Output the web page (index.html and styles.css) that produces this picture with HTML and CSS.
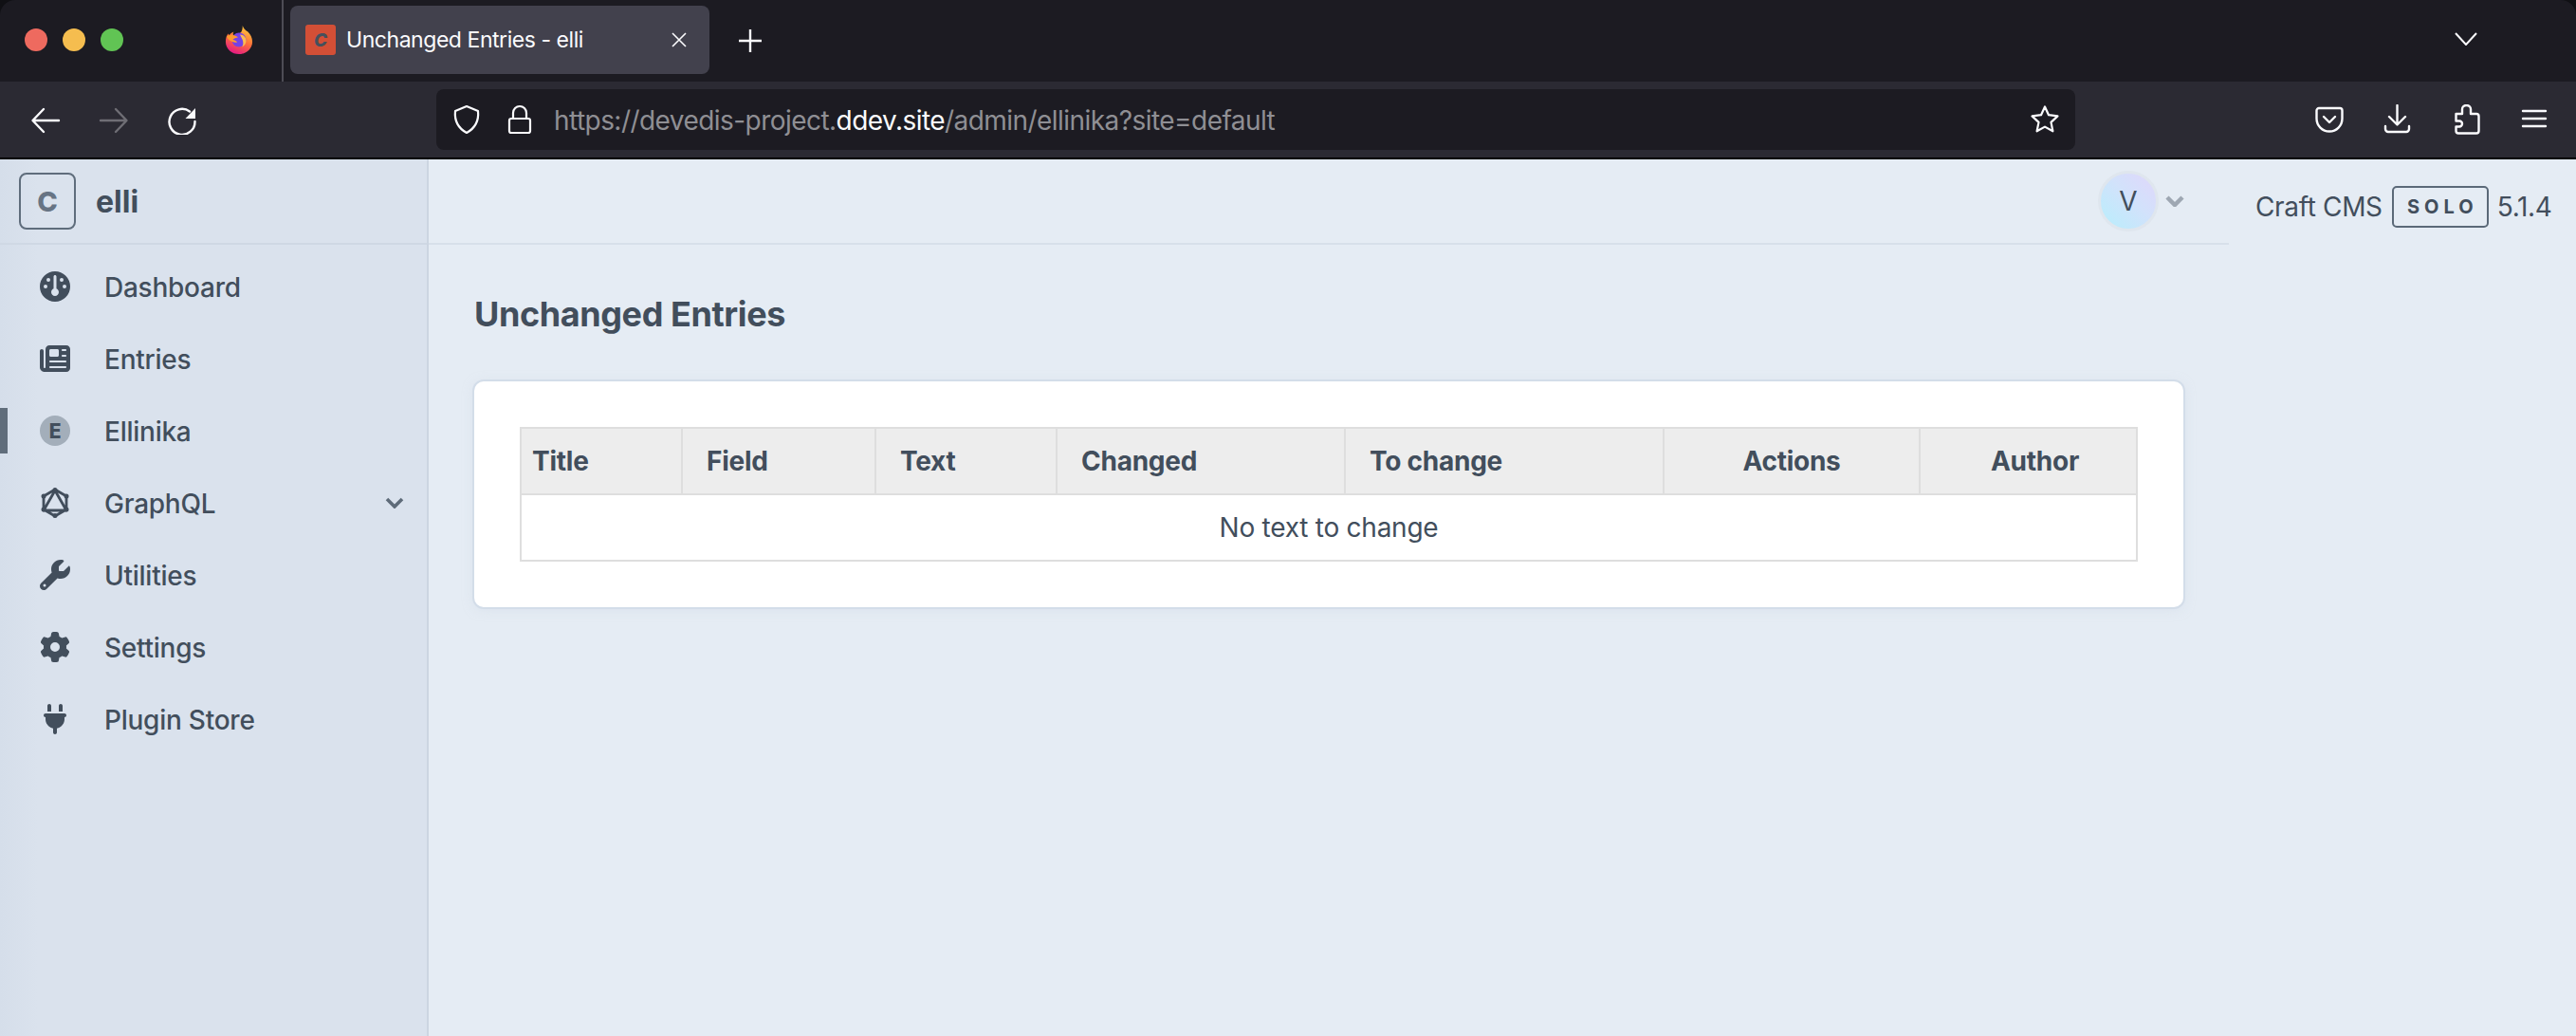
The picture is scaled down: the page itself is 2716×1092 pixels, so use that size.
FILE: index.html
```html
<!DOCTYPE html>
<html lang="en">
<head>
<meta charset="utf-8">
<title>Unchanged Entries - elli</title>
<link rel="stylesheet" href="styles.css">
</head>
<body>
<div class="window">
  <div class="tabbar">
    <div class="lights"><span class="light red"></span><span class="light yellow"></span><span class="light green"></span></div>
    <svg class="firefox" viewBox="0 0 32 32"><defs><linearGradient id="ff" x1="0.7" y1="0" x2="0.3" y2="1"><stop offset="0" stop-color="#ffcb3d"/><stop offset="0.5" stop-color="#ff7139"/><stop offset="1" stop-color="#e31587"/></linearGradient></defs><path fill="url(#ff)" d="M20 0c1 3 3 5 6 7 3 3 5 7 5 11 0 8-7 14-15 14S1 26 1 18c0-4 1-7 3-9l1 2c1-2 3-3 5-4-1 2-1 3 0 4 3-1 8-2 9-5 1-2 1-4 1-6z"/><circle cx="16" cy="16" r="8" fill="#7542e5"/><path fill="#ff9a2e" d="M2 12c4-2 9-2 13 1-2 1-5 1-6 3 2 0 4 1 5 3-5 0-10-2-12-7z"/><path fill="#ffbd4f" d="M17 10c4 0 7 3 7 7 0 3-2 6-5 7 2-2 2-5 1-8-1-2-2-4-3-6z"/></svg>
    <div class="tab-sep"></div>
    <div class="tab">
      <span class="favicon"><span class="favicon-c">C</span></span>
      <span class="tab-title">Unchanged Entries - elli</span>
      <svg class="tab-close" viewBox="0 0 16 16"><path d="M1 1l14 14M15 1L1 15"/></svg>
    </div>
    <svg class="tab-plus" viewBox="0 0 24 24"><path d="M12 0v24M0 12h24"/></svg>
    <svg class="tab-list" viewBox="0 0 24 14"><path d="M1 1l11 12L23 1"/></svg>
  </div>
  <div class="toolbar">
    <div class="nav-btns">
      <span class="tool"><svg class="ico" viewBox="0 0 32 32"><path d="M30 17H3M14 5L2.500 17 14 29"/></svg></span>
      <span class="tool"><svg class="ico dim" viewBox="0 0 32 32"><path d="M2 17h27M18 5l11.500 12L18 29"/></svg></span>
      <span class="tool"><svg class="ico" viewBox="0 0 32 32"><path d="M24 7.500A13.500 13.500 0 1 0 29.500 18"/><path class="solid" d="M30 4v11H19.500z"/></svg></span>
    </div>
    <div class="urlbar">
      <svg class="url-ico" viewBox="0 0 32 32"><path d="M16 2l12 5c1 10-3 18-12 23C7 25 3 17 4 7z"/></svg>
      <svg class="url-ico" viewBox="0 0 32 32"><path d="M7 15h18a2 2 0 0 1 2 2v11a2 2 0 0 1-2 2H7a2 2 0 0 1-2-2V17a2 2 0 0 1 2-2zM9 15V9a7 7 0 0 1 14 0v6"/></svg>
      <span class="url"><span class="url-dim">https://devedis-project.</span>ddev.site<span class="url-dim">/admin/ellinika?site=default</span></span>
      <svg class="url-ico star" viewBox="0 0 32 32"><path d="M16 2.500l4 8.700 9.500 1.200-7 6.500 1.900 9.400L16 23.600l-8.400 4.700 1.900-9.400-7-6.500 9.500-1.200z"/></svg>
    </div>
    <div class="tools-right">
      <span class="tool"><svg class="ico" viewBox="0 0 32 32"><path d="M5 4h22a2.500 2.500 0 0 1 2.500 2.500V15a13.500 13.500 0 0 1-27 0V6.500A2.500 2.500 0 0 1 5 4zM10 13l6 6 6-6"/></svg></span>
      <span class="tool"><svg class="ico" viewBox="0 0 32 32"><path d="M15.500 1v20M7 13l8.500 8.500L24 13M3 23v3a3 3 0 0 0 3 3h19a3 3 0 0 0 3-3v-3"/></svg></span>
      <span class="tool"><svg class="ico" viewBox="0 0 32 32"><path d="M5.500 10H12V5a4.500 4 0 0 1 9 0v5h6a2.500 2.500 0 0 1 2.500 2.500V28a2.500 2.500 0 0 1-2.500 2.500H8A2.500 2.500 0 0 1 5.500 28v-4.500H9a3 3 0 0 0 0-6H5.500z"/></svg></span>
      <span class="tool"><svg class="ico" viewBox="0 0 32 32"><path d="M4 7h24M4 15h24M4 23h24"/></svg></span>
    </div>
  </div>
  <div class="app">
    <aside class="sidebar">
      <div class="brand">
        <span class="logo">C</span>
        <span class="site-name">elli</span>
      </div>
      <nav class="nav">
        <a class="nav-item"><svg class="nav-ico" viewBox="0 0 512 512"><path d="M0 256a256 256 0 1 1 512 0A256 256 0 1 1 0 256zm320 96c0-26.900-16.500-49.900-40-59.300V88c0-13.300-10.700-24-24-24s-24 10.700-24 24V292.700c-23.500 9.500-40 32.500-40 59.300c0 35.300 28.700 64 64 64s64-28.700 64-64zM144 176a32 32 0 1 0 0-64 32 32 0 1 0 0 64zm-16 80a32 32 0 1 0 -64 0 32 32 0 1 0 64 0zm288 32a32 32 0 1 0 0-64 32 32 0 1 0 0 64zM400 144a32 32 0 1 0 -64 0 32 32 0 1 0 64 0z"/></svg><span>Dashboard</span></a>
        <a class="nav-item"><svg class="nav-ico" viewBox="0 0 512 512"><path d="M96 96c0-35.300 28.700-64 64-64H448c35.300 0 64 28.700 64 64V416c0 35.300-28.700 64-64 64H80c-44.200 0-80-35.800-80-80V128c0-17.700 14.300-32 32-32s32 14.300 32 32V400c0 8.800 7.200 16 16 16s16-7.200 16-16V96zm64 24v80c0 13.300 10.700 24 24 24H296c13.300 0 24-10.700 24-24V120c0-13.300-10.700-24-24-24H184c-13.300 0-24 10.700-24 24zm208-8c0 8.800 7.200 16 16 16h48c8.800 0 16-7.200 16-16s-7.200-16-16-16H384c-8.800 0-16 7.200-16 16zm0 96c0 8.800 7.200 16 16 16h48c8.800 0 16-7.200 16-16s-7.200-16-16-16H384c-8.800 0-16 7.200-16 16zM160 304c0 8.800 7.200 16 16 16H432c8.800 0 16-7.200 16-16s-7.200-16-16-16H176c-8.800 0-16 7.200-16 16zm0 96c0 8.800 7.200 16 16 16H432c8.800 0 16-7.200 16-16s-7.200-16-16-16H176c-8.800 0-16 7.200-16 16z"/></svg><span>Entries</span></a>
        <a class="nav-item active"><span class="letter-ico">E</span><span>Ellinika</span></a>
        <a class="nav-item"><svg class="nav-ico graphql" viewBox="0 0 32 32"><path d="M16 2L28 9v14L16 30 4 23V9zM16 3L4 24h24z"/><g class="dots"><circle cx="16" cy="2.500" r="2.500"/><circle cx="28" cy="9" r="2.500"/><circle cx="28" cy="23" r="2.500"/><circle cx="16" cy="29.500" r="2.500"/><circle cx="4" cy="23" r="2.500"/><circle cx="4" cy="9" r="2.500"/></g></svg><span>GraphQL</span><svg class="nav-chev" viewBox="0 0 20 12"><path d="M2 2l8 8 8-8"/></svg></a>
        <a class="nav-item"><svg class="nav-ico" viewBox="0 0 512 512"><path d="M352 320c88.400 0 160-71.600 160-160c0-15.300-2.200-30.100-6.200-44.200c-3.100-10.800-16.400-13.200-24.300-5.300l-76.800 76.800c-3 3-7.100 4.700-11.300 4.700H336c-8.800 0-16-7.200-16-16V118.600c0-4.200 1.700-8.300 4.700-11.300l76.800-76.800c7.900-7.900 5.400-21.200-5.300-24.300C382.100 2.200 367.300 0 352 0C263.600 0 192 71.600 192 160c0 19.100 3.400 37.500 9.500 54.500L19.900 396.100C7.200 408.800 0 426.100 0 444.100C0 481.600 30.400 512 67.900 512c18 0 35.300-7.200 48-19.900L297.500 310.500c17 6.200 35.400 9.500 54.500 9.500zM80 408a24 24 0 1 1 0 48 24 24 0 1 1 0-48z"/></svg><span>Utilities</span></a>
        <a class="nav-item"><svg class="nav-ico" viewBox="0 0 512 512"><path d="M495.900 166.600c3.200 8.700 .5 18.400-6.400 24.600l-43.300 39.400c1.100 8.300 1.700 16.800 1.700 25.400s-.6 17.100-1.700 25.400l43.300 39.400c6.900 6.200 9.600 15.900 6.400 24.600c-4.400 11.900-9.700 23.300-15.800 34.300l-4.700 8.100c-6.600 11-14 21.400-22.100 31.200c-5.900 7.200-15.700 9.600-24.500 6.800l-55.700-17.700c-13.400 10.300-28.200 18.900-44 25.400l-12.500 57.100c-2 9.100-9 16.300-18.200 17.800c-13.800 2.300-28 3.500-42.500 3.500s-28.700-1.200-42.500-3.500c-9.200-1.500-16.200-8.700-18.200-17.800l-12.500-57.100c-15.800-6.500-30.600-15.100-44-25.400L83.100 425.900c-8.800 2.800-18.600 .3-24.500-6.800c-8.100-9.800-15.500-20.200-22.100-31.200l-4.700-8.100c-6.100-11-11.400-22.400-15.800-34.300c-3.200-8.700-.5-18.400 6.400-24.600l43.300-39.400C64.600 273.100 64 264.600 64 256s.6-17.100 1.700-25.400L22.400 191.200c-6.900-6.200-9.600-15.900-6.400-24.600c4.400-11.900 9.700-23.300 15.800-34.300l4.700-8.100c6.600-11 14-21.400 22.100-31.200c5.900-7.200 15.700-9.600 24.500-6.800l55.700 17.700c13.400-10.300 28.200-18.900 44-25.400l12.500-57.100c2-9.100 9-16.300 18.200-17.800C227.300 1.200 241.500 0 256 0s28.700 1.200 42.500 3.500c9.200 1.500 16.200 8.700 18.200 17.800l12.500 57.100c15.800 6.500 30.600 15.100 44 25.400l55.700-17.700c8.800-2.800 18.600-.3 24.500 6.800c8.100 9.800 15.500 20.200 22.100 31.200l4.700 8.100c6.100 11 11.400 22.400 15.800 34.300zM256 336a80 80 0 1 0 0-160 80 80 0 1 0 0 160z"/></svg><span>Settings</span></a>
        <a class="nav-item"><svg class="nav-ico" viewBox="0 0 384 512"><path d="M96 0C78.300 0 64 14.300 64 32v96h64V32c0-17.700-14.300-32-32-32zM288 0c-17.700 0-32 14.300-32 32v96h64V32c0-17.700-14.300-32-32-32zM32 160c-17.700 0-32 14.300-32 32s14.300 32 32 32v32c0 77.400 55 142 128 156.800V480c0 17.700 14.300 32 32 32s32-14.300 32-32V412.800C297 398 352 333.400 352 256V224c17.700 0 32-14.300 32-32s-14.300-32-32-32H32z"/></svg><span>Plugin Store</span></a>
      </nav>
    </aside>
    <main class="main">
      <header class="topbar">
        <span class="avatar">V</span>
        <svg class="top-chev" viewBox="0 0 20 12"><path d="M2 2l8 8 8-8"/></svg>
      </header>
      <div class="content">
        <h1 class="page-title">Unchanged Entries</h1>
        <section class="card">
          <table class="grid">
            <colgroup><col class="c1"><col class="c2"><col class="c3"><col class="c4"><col class="c5"><col class="c6"><col class="c7"></colgroup>
            <thead>
              <tr><th class="first">Title</th><th>Field</th><th>Text</th><th>Changed</th><th>To change</th><th class="center">Actions</th><th class="center author">Author</th></tr>
            </thead>
            <tbody>
              <tr><td colspan="7">No text to change</td></tr>
            </tbody>
          </table>
        </section>
      </div>
    </main>
    <div class="edition">
      <span>Craft CMS</span><span class="badge">SOLO</span><span>5.1.4</span>
    </div>
  </div>
</div>
</body>
</html>
```
FILE: styles.css
```css
* { box-sizing: border-box; }
html, body { margin: 0; height: 100%; }
body { font-family: Inter, "Liberation Sans", sans-serif; color: #424e5c; background: #101014; overflow: hidden; }
.window { height: 1092px; display: flex; flex-direction: column; }

.tabbar { height: 86px; flex: none; background: #1c1b22; border-radius: 16px 16px 0 0; display: flex; align-items: flex-start; }
.lights { display: flex; gap: 16px; margin: 30px 0 0 26px; }
.light { width: 24px; height: 24px; border-radius: 50%; }
.red { background: #ee6a5f; }
.yellow { background: #f5bd4f; }
.green { background: #61c454; }
.firefox { width: 30px; height: 32px; margin: 26px 0 0 107px; flex: none; }
.tab-sep { width: 2px; height: 86px; background: #4d4c55; margin-left: 30px; flex: none; }
.tab { width: 442px; height: 72px; margin: 6px 0 0 7px; padding: 0 24px 0 16px; border-radius: 8px; background: #42414d; display: flex; align-items: center; color: #fbfbfe; flex: none; }
.favicon { width: 32px; height: 32px; border-radius: 3px; background: #d34f36; display: flex; align-items: center; justify-content: center; flex: none; }
.favicon-c { font-size: 19px; font-weight: 800; font-style: italic; color: #45505c; }
.tab-title { margin-left: 11px; font-size: 23px; letter-spacing: -0.45px; flex: 1; white-space: nowrap; }
.tab-close { width: 16px; height: 16px; fill: none; stroke: #fbfbfe; stroke-width: 1.600; flex: none; }
.tab-plus { width: 24px; height: 24px; margin: 31px 0 0 31px; fill: none; stroke: #fbfbfe; stroke-width: 2.400; flex: none; }
.tab-list { width: 24px; height: 14px; margin: 34px 104px 0 auto; fill: none; stroke: #fbfbfe; stroke-width: 2; flex: none; }

.toolbar { height: 82px; flex: none; background: #2b2a33; border-bottom: 2px solid #000; display: flex; align-items: center; padding: 0 8px 0 12px; }
.nav-btns, .tools-right { display: flex; flex: none; }
.tools-right { margin-left: auto; }
.tool { width: 72px; height: 64px; display: flex; align-items: center; justify-content: center; }
.ico { width: 32px; height: 32px; fill: none; stroke: #fbfbfe; stroke-width: 2.400; stroke-linecap: round; stroke-linejoin: round; }
.ico.dim { stroke: #6f6e75; }
.ico .solid { fill: #fbfbfe; stroke: none; }
.urlbar { width: 1728px; height: 64px; margin-left: 232px; border-radius: 8px; background: #1c1b22; display: flex; align-items: center; padding: 0 16px; flex: none; }
.url-ico { width: 32px; height: 32px; margin-right: 24px; fill: none; stroke: #fbfbfe; stroke-width: 2.200; stroke-linejoin: round; flex: none; }
.url-ico.star { margin: 0 0 0 auto; }
.url { font-size: 28px; letter-spacing: -0.55px; color: #fbfbfe; white-space: nowrap; margin-left: -4px; padding-top: 1px; }
.url-dim { color: #8f8f94; }

.app { flex: 1; display: flex; min-height: 0; background: #e5ecf4; }
.sidebar { width: 452px; flex: none; background: linear-gradient(90deg, #d5deea 0, #dae2ed 40px); border-right: 2px solid #ccd5e1; }
.brand { height: 90px; border-bottom: 2px solid #cfd8e4; display: flex; align-items: center; padding-left: 20px; }
.logo { width: 60px; height: 60px; border: 2px solid #5f6d7c; border-radius: 8px; display: flex; align-items: center; justify-content: center; font-size: 29px; font-weight: 800; color: #677484; }
.site-name { margin-left: 21px; font-size: 32px; font-weight: 700; color: #424e5c; }
.nav { display: flex; flex-direction: column; padding-top: 6px; }
.nav-item { height: 76px; display: flex; align-items: center; padding: 0 24px 0 42px; font-size: 28px; font-weight: 500; letter-spacing: -0.25px; color: #424e5c; position: relative; }
.nav-item > span:not(.letter-ico) { margin-left: 36px; padding-top: 2px; }
.nav-item.active::before { content: ""; position: absolute; left: 0; top: 14px; width: 8px; height: 48px; background: #606d7b; }
.nav-ico { width: 32px; height: 32px; fill: #424e5c; flex: none; }
.graphql { fill: none; stroke: #424e5c; stroke-width: 2.800; stroke-linejoin: round; }
.graphql .dots { fill: #424e5c; stroke: none; }
.letter-ico { width: 32px; height: 32px; border-radius: 50%; background: #a3aeba; display: flex; align-items: center; justify-content: center; font-size: 21px; font-weight: 800; color: #424e5c; flex: none; }
.nav-chev { width: 20px; height: 12px; margin-left: auto; fill: none; stroke: #5e6b79; stroke-width: 3.600; flex: none; }

.main { width: 1898px; flex: none; display: flex; flex-direction: column; }
.topbar { height: 90px; flex: none; border-bottom: 2px solid #d7e0ea; display: flex; align-items: center; justify-content: flex-end; padding-right: 47px; }
.avatar { width: 64px; height: 64px; border-radius: 50%; border: 3px solid #dfe6ee; background: linear-gradient(45deg, #bcecfc 10%, #d2e2fb 55%, #ddd9fb 90%); display: flex; align-items: center; justify-content: center; font-size: 28px; color: #424e5c; }
.top-chev { width: 20px; height: 12px; margin-left: 7px; fill: none; stroke: #9ea7b2; stroke-width: 4.500; }
.content { padding: 0 48px; }
.page-title { margin: 0; height: 144px; display: flex; align-items: center; font-size: 36px; font-weight: 700; letter-spacing: -0.4px; color: #424e5c; padding-top: 2px; }
.card { background: #fff; border-radius: 10px; padding: 48px; box-shadow: 0 0 0 2px #d3dde9, 0 2px 12px rgba(205,216,230,.5); }
.grid { width: 1704px; table-layout: fixed; border-collapse: collapse; font-size: 28px; letter-spacing: -0.25px; color: #424e5c; }
.c1 { width: 170px; } .c2 { width: 204px; } .c3 { width: 191px; } .c4 { width: 304px; } .c5 { width: 336px; } .c6 { width: 270px; } .c7 { width: 229px; }
.grid th { height: 70px; background: #ededed; border: 2px solid #dedede; font-weight: 700; text-align: left; padding: 0 0 0 25px; }
.grid th.first { padding-left: 11px; }
.grid th.center { text-align: center; padding-left: 0; }
.grid th.author { padding-left: 14px; }
.grid td { height: 70px; border: 2px solid #dedede; text-align: center; padding: 0; }

.edition { flex: 1; display: flex; align-items: center; align-self: flex-start; height: 90px; padding: 10px 0 0 28px; font-size: 28px; letter-spacing: -0.35px; white-space: nowrap; color: #424e5c; }
.badge { width: 102px; height: 44px; margin: 0 9px 0 10px; padding-left: 5px; border: 2px solid #5b6978; border-radius: 5px; display: flex; align-items: center; justify-content: center; font-size: 20px; font-weight: 700; letter-spacing: 5px; }
```
